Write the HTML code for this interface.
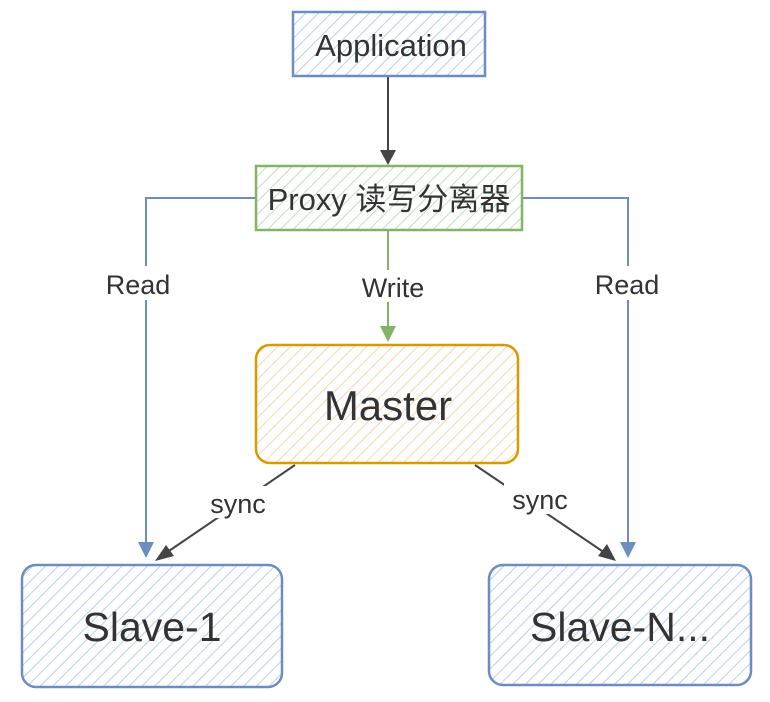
<!DOCTYPE html>
<html><head><meta charset="utf-8"><style>
html,body{margin:0;padding:0;background:#fff;width:770px;height:702px;overflow:hidden}
text{font-family:"Liberation Sans","Noto Sans CJK SC",sans-serif;fill:#333}
</style></head><body>
<svg width="770" height="702" viewBox="0 0 770 702" xmlns="http://www.w3.org/2000/svg">
<defs>
<pattern id="hb" width="9" height="9" patternUnits="userSpaceOnUse" patternTransform="rotate(45)"><rect width="9" height="9" fill="#fff"/><line x1="0" y1="0" x2="0" y2="9" stroke="#b9cff0" stroke-width="2"/></pattern>
<pattern id="hg" width="9" height="9" patternUnits="userSpaceOnUse" patternTransform="rotate(45)"><rect width="9" height="9" fill="#fff"/><line x1="0" y1="0" x2="0" y2="9" stroke="#c3dfc0" stroke-width="2"/></pattern>
<pattern id="ho" width="9" height="9" patternUnits="userSpaceOnUse" patternTransform="rotate(45)"><rect width="9" height="9" fill="#fff"/><line x1="0" y1="0" x2="0" y2="9" stroke="#fbd5b0" stroke-width="2"/></pattern>
</defs>
<line x1="388" y1="76" x2="388" y2="152" stroke="#444" stroke-width="2"/>
<polygon points="380,150 396,150 388,165" fill="#444"/>
<polyline points="256,198 146,198 146,545" fill="none" stroke="#6c8ebf" stroke-width="2"/>
<polygon points="138,542 154,542 146,558" fill="#6c8ebf"/>
<polyline points="522,198 628,198 628,545" fill="none" stroke="#6c8ebf" stroke-width="2"/>
<polygon points="620,542 636,542 628,558" fill="#6c8ebf"/>
<line x1="388" y1="230" x2="388" y2="330" stroke="#82b366" stroke-width="2"/>
<polygon points="380,326 396,326 388,342" fill="#82b366"/>
<line x1="295" y1="465" x2="166" y2="553" stroke="#444" stroke-width="2"/>
<polygon points="155,561 166,545 174,556" fill="#444"/>
<line x1="475" y1="465" x2="605" y2="553" stroke="#444" stroke-width="2"/>
<polygon points="616,561 598,556 607,544" fill="#444"/>
<rect x="98" y="266" width="82" height="34" fill="#fff"/>
<text x="138" y="294" font-size="27" text-anchor="middle">Read</text>
<rect x="586" y="266" width="82" height="34" fill="#fff"/>
<text x="627" y="294" font-size="27" text-anchor="middle">Read</text>
<rect x="354" y="270" width="78" height="32" fill="#fff"/>
<text x="393" y="297" font-size="27" text-anchor="middle">Write</text>
<rect x="202" y="486" width="72" height="32" fill="#fff"/>
<text x="238" y="513" font-size="27" text-anchor="middle">sync</text>
<rect x="504" y="482" width="72" height="32" fill="#fff"/>
<text x="540" y="509" font-size="27" text-anchor="middle">sync</text>
<rect x="293" y="12" width="192" height="64" fill="url(#hb)" stroke="#6c8ebf" stroke-width="2.5"/>
<text x="391" y="56" font-size="31" text-anchor="middle">Application</text>
<rect x="256" y="166" width="266" height="64" fill="url(#hg)" stroke="#82b366" stroke-width="2.5"/>
<text x="389" y="210" font-size="31" text-anchor="middle">Proxy 读写分离器</text>
<rect x="256" y="345" width="262" height="118" rx="14" fill="url(#ho)" stroke="#d79b00" stroke-width="2.5"/>
<text x="388" y="420" font-size="42" text-anchor="middle">Master</text>
<rect x="22" y="565" width="260" height="122" rx="14" fill="url(#hb)" stroke="#6c8ebf" stroke-width="2.5"/>
<text x="152" y="641" font-size="41" text-anchor="middle">Slave-1</text>
<rect x="489" y="565" width="262" height="120" rx="14" fill="url(#hb)" stroke="#6c8ebf" stroke-width="2.5"/>
<text x="620" y="641" font-size="41" text-anchor="middle">Slave-N...</text>
</svg>
</body></html>
